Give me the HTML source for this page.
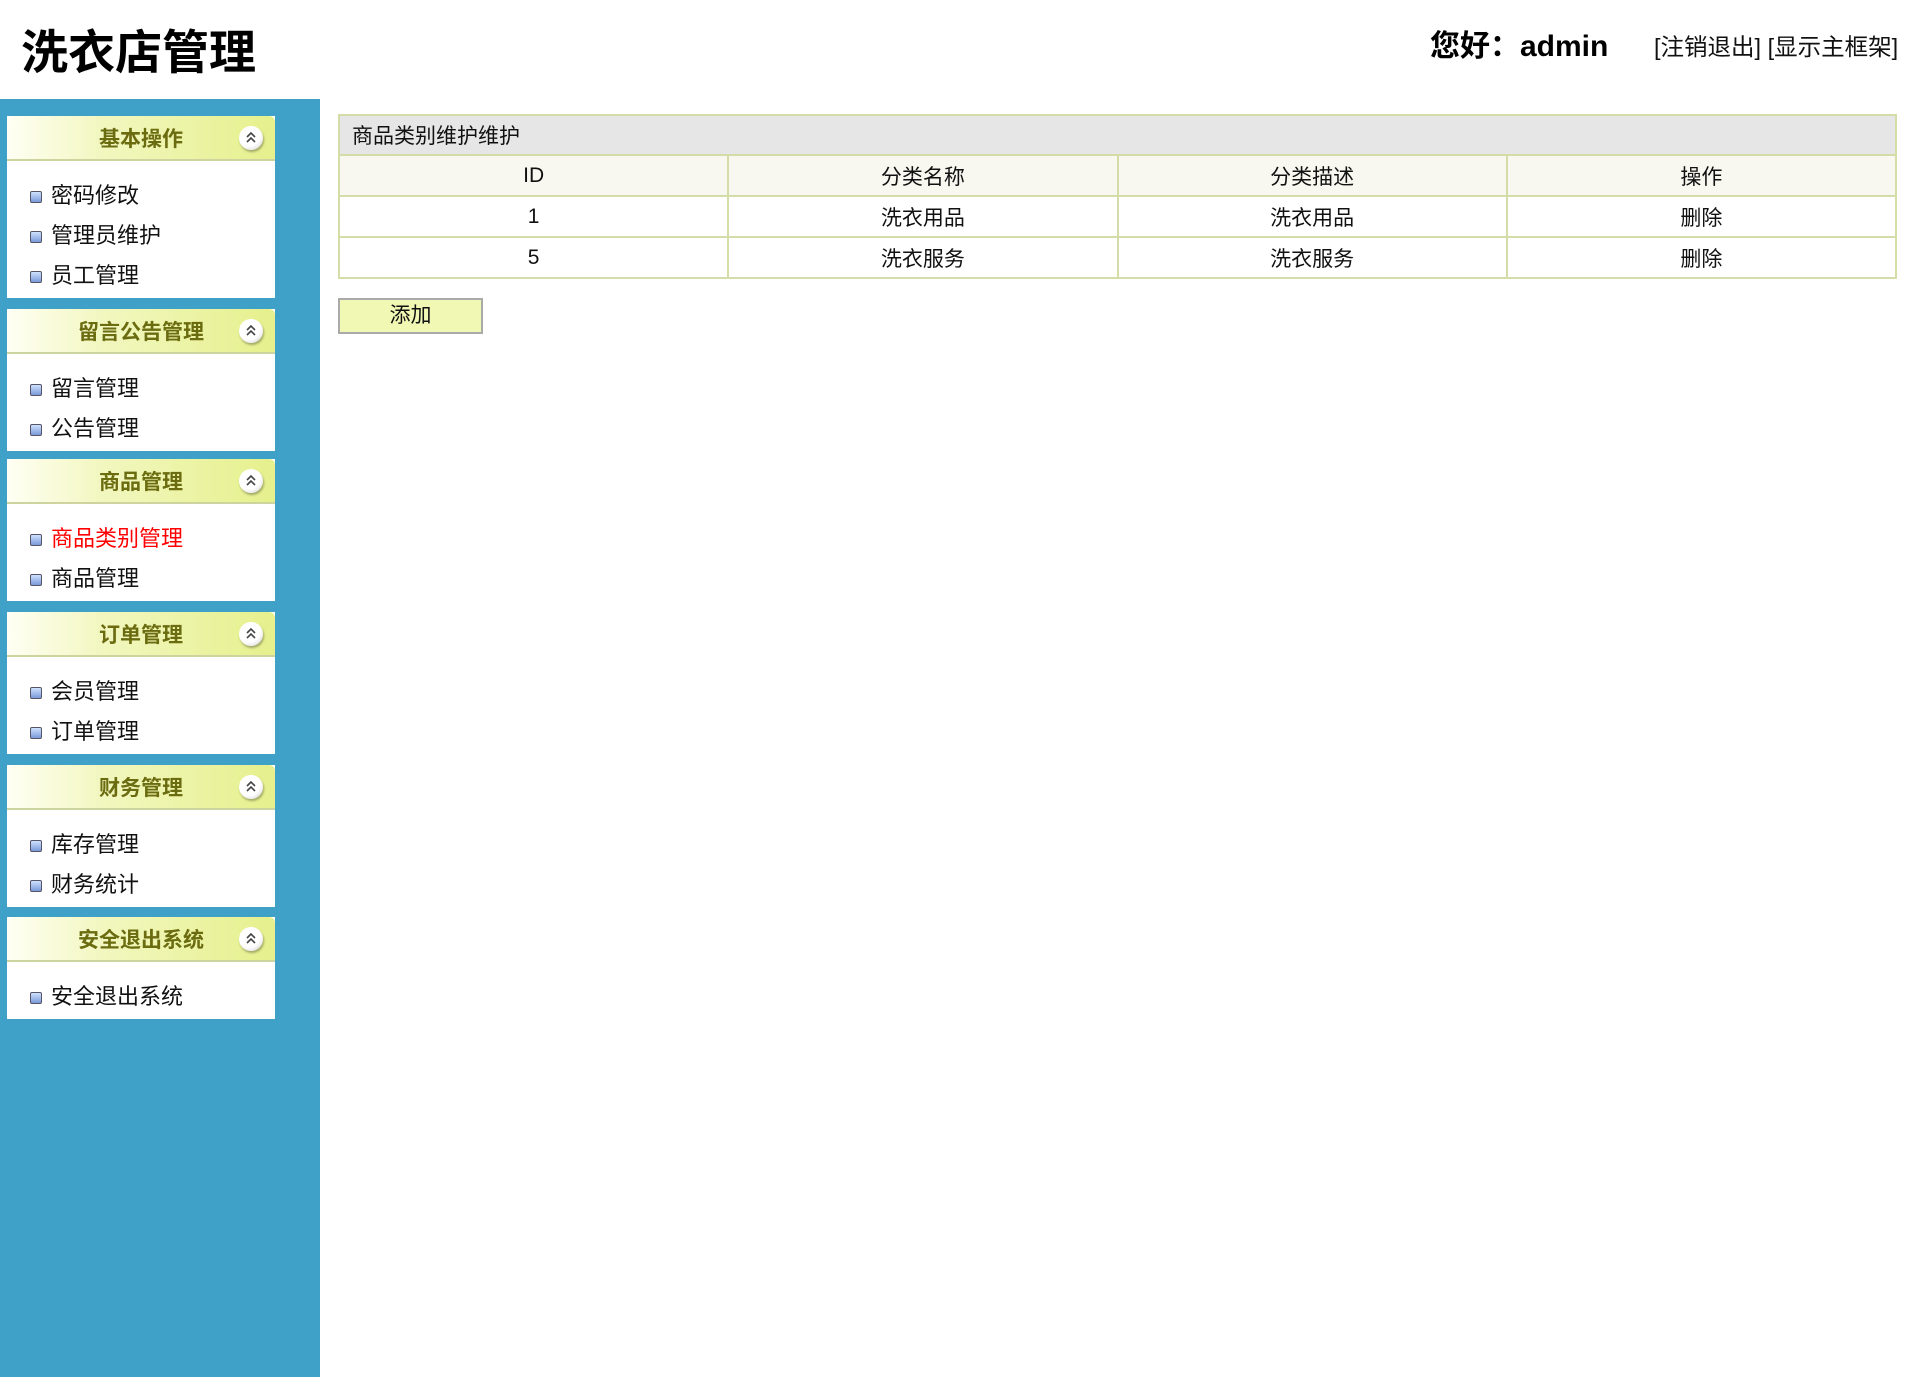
<!DOCTYPE html>
<html><head><meta charset="utf-8"><style>
*{margin:0;padding:0;box-sizing:border-box}
body{width:1911px;height:1377px;background:#fff;font-family:"Liberation Sans","Noto Sans CJK SC",sans-serif;position:relative;overflow:hidden;color:#111}
#title{position:absolute;left:21px;top:14px;font-size:47px;font-weight:bold;color:#000;letter-spacing:0px}
#hello{position:absolute;left:1430px;top:21px;font-size:30px;font-weight:bold;color:#000}
#links{position:absolute;left:1654px;top:28px;font-size:23.5px;color:#111}
#side{position:absolute;left:0;top:99px;width:320px;height:1278px;background:#3fa0c8}
.panel{position:absolute;left:7px;width:268px;background:#fff}
.ph{height:45px;border-radius:6px 6px 0 0;background:linear-gradient(to right,#fffff4 0%,#f2f7c0 35%,#e6f08c 100%);border-bottom:2px solid #cdd4a0;text-align:center;font-size:21px;font-weight:bold;color:#6b6b10;line-height:48px;position:relative}
.ph i{position:absolute;right:12px;top:10px;width:24px;height:24px;border-radius:50%;background:radial-gradient(circle at 40% 35%,#fff 55%,#ccc 100%);box-shadow:1px 2px 2px rgba(0,0,0,.3)}
.ph i svg{position:absolute;left:6px;top:5px}
.pb{padding:15px 0 2px 0}
.it{height:40px;line-height:40px;font-size:22px;padding-left:44px;position:relative}
.it:before{content:"";position:absolute;left:23px;top:15px;width:10px;height:10px;background:linear-gradient(#cfe0ff,#7a9ad8);border:1px solid #556;border-radius:2px}
.red{color:#f00}
table{position:absolute;left:338px;top:114px;width:1559px;border-collapse:collapse;font-size:21px}
td{border:2px solid #d4dca8;height:41px;text-align:center}
.cap td{background:#e6e6e6;text-align:left;padding-left:12px;height:40px}
.hd td{background:#f8f8f0}
#add{position:absolute;left:338px;top:298px;width:145px;height:36px;background:#f0f8b4;border:2px solid #aaa;font-size:21px;text-align:center;line-height:32px}
</style></head><body>
<div id="title">洗衣店管理</div>
<div id="hello">您好：admin</div>
<div id="links">[注销退出] [显示主框架]</div>
<div id="side">
<div class="panel" style="top:17px"><div class="ph">基本操作<i><svg width="12" height="13" viewBox="0 0 12 13"><path d="M2 6 L6 2 L10 6 M2 11 L6 7 L10 11" fill="none" stroke="#444" stroke-width="1.6"/></svg></i></div><div class="pb"><div class="it">密码修改</div><div class="it">管理员维护</div><div class="it">员工管理</div></div></div>
<div class="panel" style="top:210px"><div class="ph">留言公告管理<i><svg width="12" height="13" viewBox="0 0 12 13"><path d="M2 6 L6 2 L10 6 M2 11 L6 7 L10 11" fill="none" stroke="#444" stroke-width="1.6"/></svg></i></div><div class="pb"><div class="it">留言管理</div><div class="it">公告管理</div></div></div>
<div class="panel" style="top:360px"><div class="ph">商品管理<i><svg width="12" height="13" viewBox="0 0 12 13"><path d="M2 6 L6 2 L10 6 M2 11 L6 7 L10 11" fill="none" stroke="#444" stroke-width="1.6"/></svg></i></div><div class="pb"><div class="it red">商品类别管理</div><div class="it">商品管理</div></div></div>
<div class="panel" style="top:513px"><div class="ph">订单管理<i><svg width="12" height="13" viewBox="0 0 12 13"><path d="M2 6 L6 2 L10 6 M2 11 L6 7 L10 11" fill="none" stroke="#444" stroke-width="1.6"/></svg></i></div><div class="pb"><div class="it">会员管理</div><div class="it">订单管理</div></div></div>
<div class="panel" style="top:666px"><div class="ph">财务管理<i><svg width="12" height="13" viewBox="0 0 12 13"><path d="M2 6 L6 2 L10 6 M2 11 L6 7 L10 11" fill="none" stroke="#444" stroke-width="1.6"/></svg></i></div><div class="pb"><div class="it">库存管理</div><div class="it">财务统计</div></div></div>
<div class="panel" style="top:818px"><div class="ph">安全退出系统<i><svg width="12" height="13" viewBox="0 0 12 13"><path d="M2 6 L6 2 L10 6 M2 11 L6 7 L10 11" fill="none" stroke="#444" stroke-width="1.6"/></svg></i></div><div class="pb"><div class="it">安全退出系统</div></div></div>
</div>
<table>
<tr class="cap"><td colspan="4">商品类别维护维护</td></tr>
<tr class="hd"><td style="width:25%">ID</td><td style="width:25%">分类名称</td><td style="width:25%">分类描述</td><td>操作</td></tr>
<tr><td>1</td><td>洗衣用品</td><td>洗衣用品</td><td>删除</td></tr>
<tr><td>5</td><td>洗衣服务</td><td>洗衣服务</td><td>删除</td></tr>
</table>
<div id="add">添加</div>
</body></html>
